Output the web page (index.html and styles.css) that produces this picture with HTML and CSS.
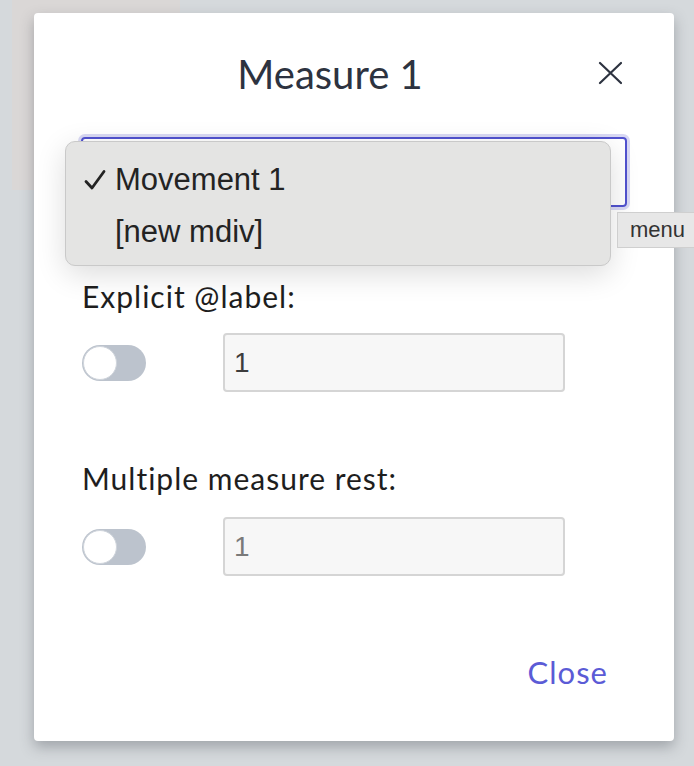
FILE: index.html
```html
<!DOCTYPE html>
<html lang="en">
<head>
<meta charset="utf-8">
<title>Measure 1</title>
<link rel="stylesheet" href="styles.css">
</head>
<body>
<div class="modal">
  <div class="header">
    <h1 class="title">Measure 1</h1>
    <button class="close-x" aria-label="Close">
      <svg width="24" height="24" viewBox="0 0 24 24"><path d="M2 2L23 22M23 2L2 22" stroke="#2d3340" stroke-width="2.2" fill="none" stroke-linecap="round"/></svg>
    </button>
  </div>

  <div class="select-wrap">
    <div class="select"></div>
    <div class="menu">
      <div class="menu-item"><span class="check"><svg width="22" height="22" viewBox="0 0 22 22"><path d="M2 12.5L8 19L20 2.5" stroke="#232323" stroke-width="2.8" fill="none" stroke-linecap="round" stroke-linejoin="round"/></svg></span>Movement 1</div>
      <div class="menu-item"><span class="check"></span>[new mdiv]</div>
    </div>
    <div class="tooltip">menu</div>
  </div>

  <div class="label label-1">Explicit @label:</div>
  <div class="row row-1">
    <span class="toggle"><span class="knob"></span></span>
    <div class="input">1</div>
  </div>

  <div class="label label-2">Multiple measure rest:</div>
  <div class="row row-2">
    <span class="toggle"><span class="knob"></span></span>
    <div class="input disabled">1</div>
  </div>

  <div class="footer">
    <button class="close-btn">Close</button>
  </div>
</div>
</body>
</html>
```
FILE: styles.css
```css
html, body {
  margin: 0;
  padding: 0;
}
body {
  width: 694px;
  height: 766px;
  overflow: hidden;
  background:
    linear-gradient(#dad7d6, #dad7d6) 12px 0 / 168px 190px no-repeat,
    #d5d9dc;
  font-family: Lato, "Open Sans", sans-serif;
}
.modal {
  box-sizing: border-box;
  margin: 13px 0 0 34px;
  width: 640px;
  height: 728px;
  background: #fff;
  border-radius: 4px;
  box-shadow: 0 6px 14px rgba(60, 66, 74, 0.35);
  padding: 39px 47px 51px 47px;
  display: flex;
  flex-direction: column;
}
.header {
  display: flex;
  align-items: center;
  height: 44px;
}
.title {
  flex: 1;
  margin: 0;
  text-align: center;
  font-weight: 400;
  font-size: 40px;
  line-height: 44px;
  color: #2d3340;
}
.close-x {
  width: 48px;
  height: 44px;
  border: 0;
  background: none;
  padding: 0 5px 2px 0;
  display: flex;
  align-items: center;
  justify-content: flex-end;
}
.select-wrap {
  position: relative;
  margin-top: 41px;
}
.select {
  box-sizing: border-box;
  height: 70px;
  border: 2px solid #5152cf;
  border-radius: 4px;
  box-shadow: 0 0 0 3px #d9d9f4;
}
.menu {
  position: absolute;
  left: -16px;
  top: 4px;
  width: 546px;
  height: 125px;
  box-sizing: border-box;
  background: #e4e4e3;
  border: 1px solid #c9c9c9;
  border-radius: 10px;
  box-shadow: 0 8px 30px rgba(0, 0, 0, 0.14);
  padding-top: 12px;
  font-family: "Liberation Sans", Arial, sans-serif;
  font-size: 31px;
  color: #232323;
}
.menu-item {
  display: flex;
  align-items: center;
  height: 52px;
  padding-left: 18px;
}
.check {
  width: 31px;
  height: 22px;
  display: flex;
  align-items: center;
}
.tooltip {
  position: absolute;
  left: 536px;
  top: 75px;
  width: 90px;
  height: 36px;
  box-sizing: border-box;
  background: #e7e7e7;
  border: 1px solid #cfcfcf;
  padding-left: 12px;
  font-family: "Liberation Sans", Arial, sans-serif;
  font-size: 22px;
  line-height: 34px;
  color: #333;
}
.label {
  font-size: 30px;
  letter-spacing: 1px;
  line-height: 34px;
  color: #1e1e1e;
  padding-left: 1px;
}
.label-1 { margin-top: 72px; }
.label-2 { margin-top: 69px; }
.row {
  display: flex;
  align-items: center;
}
.row-1 { margin-top: 20px; }
.row-2 { margin-top: 22px; }
.toggle {
  position: relative;
  width: 64px;
  height: 36px;
  border-radius: 18px;
  background: #bcc3cd;
  margin-left: 1px;
  margin-right: 77px;
  flex: none;
}
.knob {
  position: absolute;
  left: 1px;
  top: 1px;
  width: 32px;
  height: 32px;
  border-radius: 50%;
  background: #fff;
  border: 1px solid #d0d5dc;
}
.input {
  box-sizing: border-box;
  width: 342px;
  height: 59px;
  background: #f7f7f7;
  border: 2px solid #d5d5d5;
  border-radius: 4px;
  padding-left: 9px;
  font-family: "Liberation Sans", Arial, sans-serif;
  font-size: 28px;
  line-height: 55px;
  color: #3d3d3d;
}
.input.disabled {
  color: #7a7a7a;
}
.footer {
  margin-top: auto;
  display: flex;
  justify-content: flex-end;
}
.close-btn {
  border: 0;
  background: none;
  padding: 0 19px 0 0;
  font-family: Lato, "Open Sans", sans-serif;
  font-size: 31px;
  letter-spacing: 1px;
  line-height: 36px;
  color: #5b5bd6;
}
```
